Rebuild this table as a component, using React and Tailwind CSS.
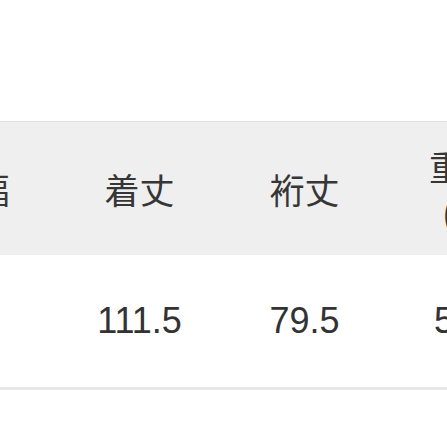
import React from "react";

const headers = [
  { key: "mihaba", lines: ["身幅"], w: "w-[165px]" },
  { key: "kitake", lines: ["着丈"], w: "w-[165px]" },
  { key: "yukitake", lines: ["裄丈"], w: "w-[165px]" },
  { key: "omosa", lines: ["重さ", "(g)"], w: "w-[154px]" },
  { key: "extra", lines: [""], w: "w-[165px]" },
];

const values = ["61", "111.5", "79.5", "560", ""];

export default function App() {
  return (
    <div className="w-[447px] h-[447px] overflow-hidden bg-white">
      <div className="pt-[121px] ml-[-108px] w-[825px]">
        {/* header row */}
        <div className="flex h-[134px] bg-[#efefef] border-t border-[#e2e2e2]">
          {headers.map(({ key, lines, w }) => (
            <div
              key={key}
              className={`${w} shrink-0 flex flex-col items-center justify-center text-[35px] leading-[46px] text-[#363636] font-['Noto_Sans_CJK_JP','Noto_Sans_CJK_SC',sans-serif]`}
            >
              {lines.map((l, i) => (
                <span key={i}>{l}</span>
              ))}
            </div>
          ))}
        </div>
        {/* data row */}
        <div className="flex h-[135px] border-b-[3px] border-[#e8e8e8]">
          {values.map((v, i) => (
            <div
              key={i}
              className={`${headers[i].w} shrink-0 flex items-center justify-center text-[36px] text-[#333] font-['Liberation_Sans',Arial,sans-serif]`}
            >
              {v}
            </div>
          ))}
        </div>
      </div>
    </div>
  );
}
